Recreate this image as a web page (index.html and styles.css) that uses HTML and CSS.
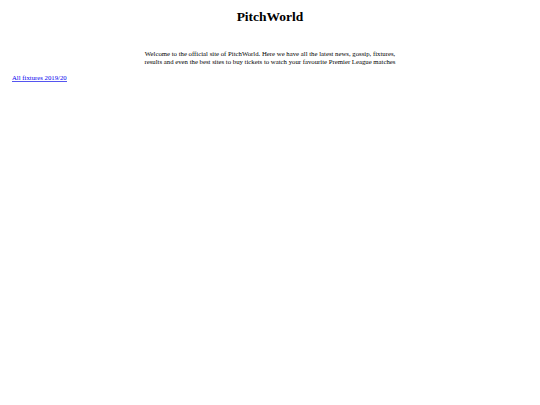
FILE: index.html
```html
<!DOCTYPE html>
<html>
<head>
<meta charset="utf-8">
<title>PitchWorld</title>
<link rel="stylesheet" href="styles.css">
</head>
<body>
<header class="header">
  <h1 class="title">PitchWorld</h1>
</header>
<section class="intro">
  <p class="intro-text">Welcome to the official site of PitchWorld. Here we have all the latest news, gossip, fixtures, results and even the best sites to buy tickets to watch your favourite Premier League matches</p>
</section>
<nav class="links">
  <a class="link" href="#">All fixtures 2019/20</a>
</nav>
</body>
</html>
```
FILE: styles.css
```css
html, body {
  margin: 0;
  padding: 0;
  background: #ffffff;
}
body {
  font-family: "Liberation Serif", "Times New Roman", serif;
  font-size: 6.75px;
  color: #000000;
  padding: 0 12px;
}
.header {
  text-align: center;
  padding-top: 9px;
}
.title {
  font-size: 13.5px;
  font-weight: bold;
  margin: 0;
  line-height: 15px;
}
.intro {
  display: flex;
  justify-content: center;
  padding-top: 26px;
}
.intro-text {
  margin: 0;
  width: 260px;
  text-align: center;
  line-height: 7.5px;
}
.links {
  padding-top: 9px;
}
.link {
  display: inline-block;
  color: #0000ee;
  text-decoration: none;
  line-height: 6px;
  border-bottom: 1px solid #5555f0;
}
```
